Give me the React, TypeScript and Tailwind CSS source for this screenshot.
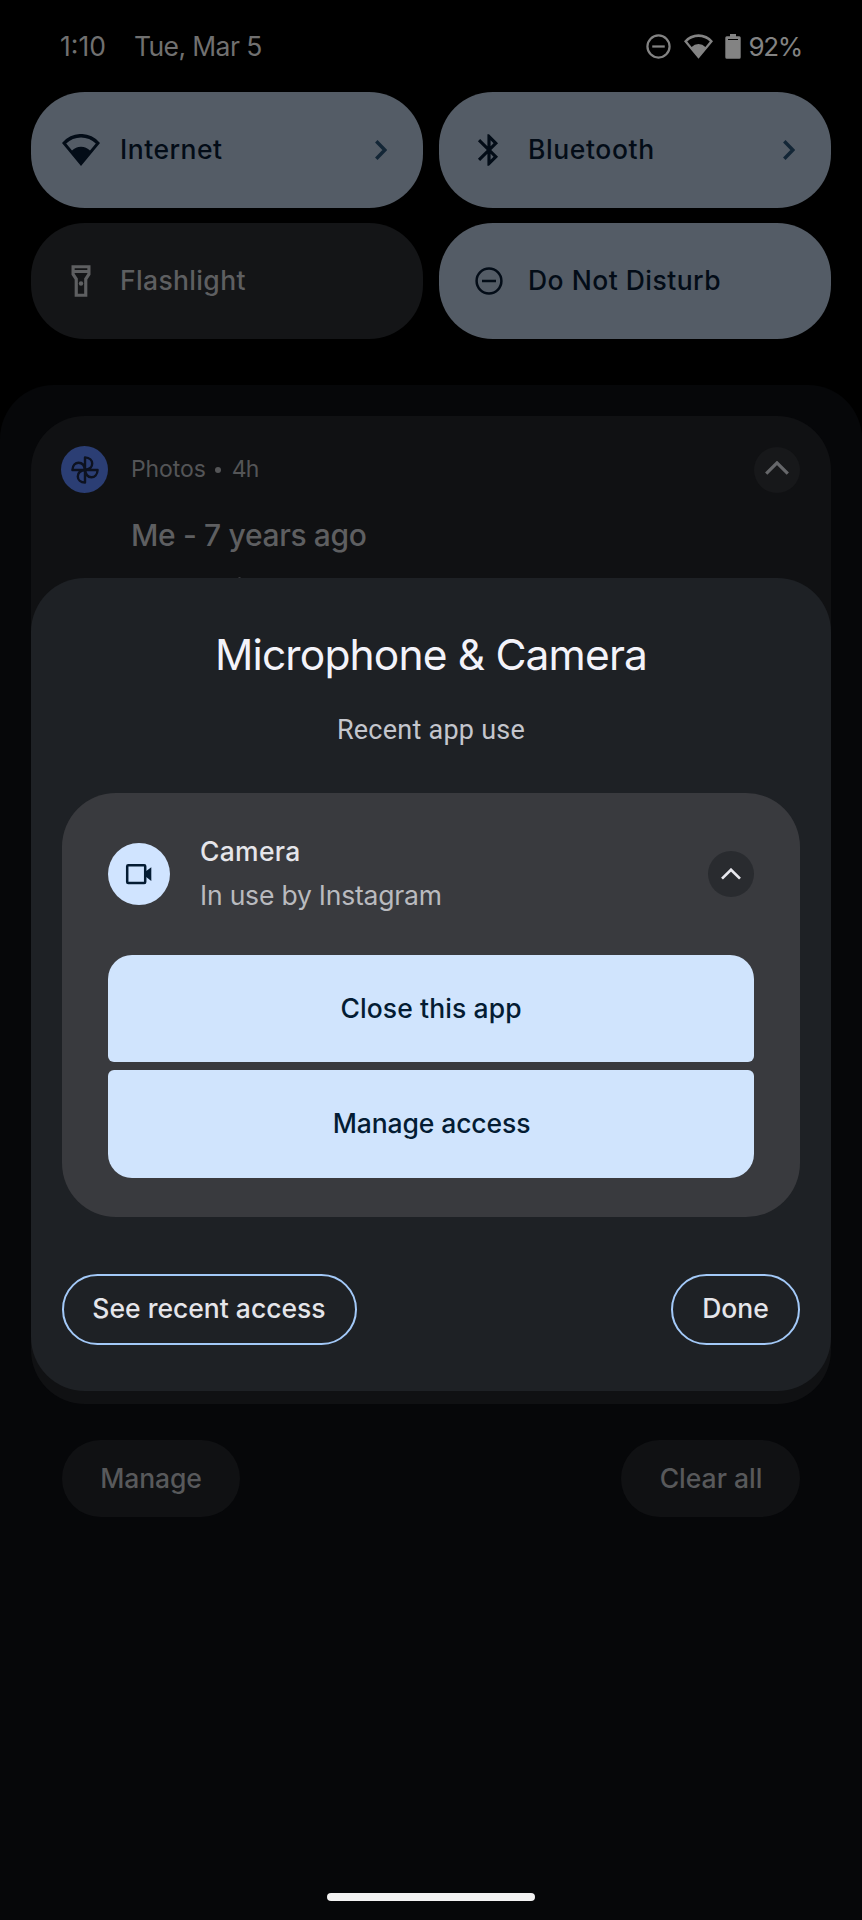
import React, { useState } from 'react';
import clsx from 'clsx';

interface Tile {
  id: string;
  label: string;
  active: boolean;
  hasDetails: boolean;
  icon: React.ReactNode;
  spacing: string;
}

function WifiIcon({ className }: { className?: string }) {
  return (
    <svg viewBox="0 0 38 32" className={className} fill="currentColor">
      <path
        fillRule="evenodd"
        d="M0 9A24.5 24.5 0 0 1 38 9L19 32ZM4.2 9.6L10 16.6A12.5 12.5 0 0 1 28 16.6L33.8 9.6A21 21 0 0 0 4.2 9.6Z"
      />
    </svg>
  );
}

function DndIcon({ className }: { className?: string }) {
  return (
    <svg viewBox="0 0 28 28" className={className} fill="none" stroke="currentColor" strokeWidth="2.5">
      <circle cx="14" cy="14" r="12.4" />
      <path d="M7 14h14" />
    </svg>
  );
}

function BluetoothIcon({ className }: { className?: string }) {
  return (
    <svg viewBox="0 0 24 24" className={className} fill="currentColor">
      <path d="M17.71 7.71L12 2h-1v7.59L6.41 5 5 6.41 10.59 12 5 17.59 6.41 19 11 14.41V22h1l5.71-5.71-4.3-4.29 4.3-4.29zM13 5.83l1.88 1.88L13 9.59V5.83zm1.88 10.46L13 18.17v-3.76l1.88 1.88z" />
    </svg>
  );
}

function FlashlightIcon({ className }: { className?: string }) {
  return (
    <svg viewBox="0 0 24 24" className={className} fill="currentColor">
      <path
        fillRule="evenodd"
        d="M18 2H6v6l2 3v11h8V11l2-3V2zm-2 2v1H8V4h8zm-2 6.4V20h-4v-9.6L8 7.4V7h8v.4l-2 3z"
      />
      <circle cx="12" cy="13.6" r="1.4" />
    </svg>
  );
}

function BatteryIcon({ className }: { className?: string }) {
  return (
    <svg viewBox="0 0 16 25" className={className} fill="currentColor">
      <path
        fillRule="evenodd"
        d="M5 0h6v2.3h3.2q1.5 0 1.5 1.5v19.4q0 1.5-1.5 1.5H1.8q-1.5 0-1.5-1.5V3.8q0-1.5 1.5-1.5H5zM3 4.9v1.2h10V4.9z"
      />
    </svg>
  );
}

function PhotosIcon({ className }: { className?: string }) {
  return (
    <svg viewBox="-14 -14 28 28" className={className} fill="none" stroke="currentColor" strokeWidth="2.4" strokeLinejoin="round">
      {[0, 90, 180, 270].map((angle) => (
        <path key={angle} d="M0 0V-12.6C4.6 -12.4 7.2 -9.6 7.2 -6.4C7.2 -3.2 5.2 -0.6 0 0Z" transform={`rotate(${angle})`} />
      ))}
    </svg>
  );
}

function VideoIcon({ className }: { className?: string }) {
  return (
    <svg viewBox="0 0 28 22" className={className}>
      <rect x="2.2" y="2.2" width="18" height="17.8" rx="1" fill="none" stroke="currentColor" strokeWidth="2.5" />
      <path d="M20.5 8.6L26.3 4.2V18L20.5 13.6Z" fill="currentColor" />
    </svg>
  );
}

function ChevronUp({ className }: { className?: string }) {
  return (
    <svg viewBox="0 0 24 14" className={className} fill="none" stroke="currentColor" strokeWidth="3.2">
      <path d="M1.2 12.6L12 1.9L22.8 12.6" />
    </svg>
  );
}

const tiles: Tile[] = [
  { id: 'internet', label: 'Internet', active: true, hasDetails: true, icon: <WifiIcon className="w-[38px] h-8" />, spacing: 'tracking-[0.5px]' },
  { id: 'bluetooth', label: 'Bluetooth', active: true, hasDetails: true, icon: <BluetoothIcon className="w-[38px] h-[38px]" />, spacing: 'tracking-[0.6px]' },
  { id: 'flashlight', label: 'Flashlight', active: false, hasDetails: false, icon: <FlashlightIcon className="w-[38px] h-[38px]" />, spacing: 'tracking-[0.35px]' },
  { id: 'dnd', label: 'Do Not Disturb', active: true, hasDetails: false, icon: <DndIcon className="w-7 h-7" />, spacing: 'tracking-[0.48px]' },
];

function QuickTile({ tile, active, onToggle }: { tile: Tile; active: boolean; onToggle: () => void }) {
  return (
    <button
      onClick={onToggle}
      className={clsx(
        'flex h-[116px] items-center rounded-[54px] pl-[31px] pr-9 text-left',
        active ? 'bg-[#545c66] text-[#030c17]' : 'bg-[#141517] text-[#5e5f61]'
      )}
    >
      <span className="flex w-[38px] justify-center">{tile.icon}</span>
      <span className={clsx('ml-5 flex-1 whitespace-nowrap text-[26.5px] font-medium', tile.spacing)}>{tile.label}</span>
      {tile.hasDetails && (
        <svg viewBox="0 0 12 20" className="h-5 w-3 text-[#132636]" fill="none" stroke="currentColor" strokeWidth="3.4">
          <path d="M1.3 1.2L9.8 10L1.3 18.8" />
        </svg>
      )}
    </button>
  );
}

function StatusBar() {
  return (
    <div className="flex h-[92px] items-center pl-[60px] pr-[60px] text-[26.5px] text-[#707070]">
      <span className="pt-[2px]">1:10</span>
      <span className="ml-7 pt-[2px] tracking-[-0.6px]">Tue, Mar 5</span>
      <div className="ml-auto flex items-center text-[#838383]">
        <DndIcon className="h-[25px] w-[25px]" />
        <WifiIcon className="ml-[13px] h-[25px] w-[29px]" />
        <BatteryIcon className="ml-3 h-[25px] w-4" />
        <span className="ml-[7px] text-[26px] tracking-[-1.3px]">92%</span>
      </div>
    </div>
  );
}

function PrivacyDialog() {
  const [expanded, setExpanded] = useState(true);

  return (
    <div className="absolute left-[31px] top-[578px] flex h-[813px] w-[800px] flex-col rounded-[54px] bg-[#1e2125] px-[31px]">
      <h1 className="mt-[52px] text-center text-[42.5px] leading-[50px] tracking-[-0.85px] text-[#f3f3fa]">Microphone &amp; Camera</h1>
      <p className="mt-[34px] text-center [font-family:Roboto,sans-serif] text-[27px] leading-8 tracking-[0.25px] text-[#c4c6cd]">Recent app use</p>

      <div className="mt-[47px] h-[424px] rounded-[54px] bg-[#393a3e] px-[46px] pt-[44px]">
        <div className="flex h-[74px] items-center">
          <div className="flex h-[62px] w-[62px] items-center justify-center rounded-full bg-[#d0e4ff] text-[#041c33]">
            <VideoIcon className="h-[22px] w-7" />
          </div>
          <div className="-mt-[2px] ml-[30px]">
            <p className="text-[26.5px] font-medium leading-[44px] tracking-[0.3px] text-[#e5e5ea]">Camera</p>
            <p className="text-[26.5px] leading-[44px] tracking-[-0.2px] text-[#b9babf]">In use by Instagram</p>
          </div>
          <button
            onClick={() => setExpanded(!expanded)}
            className="ml-auto flex h-[46px] w-[46px] items-center justify-center rounded-full bg-[#292b2f] text-[#e8e8ee]"
          >
            <ChevronUp className="h-3 w-5" />
          </button>
        </div>

        {expanded && (
          <div className="mt-[44px] flex flex-col gap-2 text-[26.5px] font-medium text-[#041c33]">
            <button className="h-[107px] rounded-t-3xl rounded-b-[6px] bg-[#d0e4fd] tracking-[0.1px]">Close this app</button>
            <button className="h-[108px] rounded-t-[6px] rounded-b-3xl bg-[#d0e4fd] pl-px tracking-[-0.1px]">Manage access</button>
          </div>
        )}
      </div>

      <div className="mt-[57px] flex justify-between text-[26.5px] font-medium text-[#e5e5ea]">
        <button className="h-[71px] w-[295px] rounded-full border-2 border-[#a3c9f8] pb-px pr-px">See recent access</button>
        <button className="h-[71px] w-[129px] rounded-full border-2 border-[#a3c9f8] pb-px">Done</button>
      </div>
    </div>
  );
}

function App() {
  const [active, setActive] = useState<Record<string, boolean>>(
    Object.fromEntries(tiles.map((tile) => [tile.id, tile.active]))
  );

  return (
    <div className="relative flex h-[1920px] w-[862px] flex-col overflow-hidden bg-black [font-family:Inter,sans-serif]">
      <StatusBar />

      <div className="grid grid-cols-2 gap-x-4 gap-y-[15px] px-[31px]">
        {tiles.map((tile) => (
          <QuickTile
            key={tile.id}
            tile={tile}
            active={active[tile.id]}
            onToggle={() => setActive({ ...active, [tile.id]: !active[tile.id] })}
          />
        ))}
      </div>

      {/* Notification shade */}
      <div className="mt-[46px] flex flex-1 flex-col rounded-t-[54px] bg-[#060709] px-[31px] pt-[31px]">
        <div className="h-[988px] rounded-[54px] bg-[#101113] pl-[30px] pr-[31px] pt-[30px]">
          <div className="flex items-center">
            <div className="flex h-[47px] w-[47px] items-center justify-center rounded-full bg-[#2b3e74] text-[#0d1220]">
              <PhotosIcon className="h-7 w-7" />
            </div>
            <div className="ml-[23px] flex items-center text-[23px] text-[#545557]">
              <span className="tracking-[-0.1px]">Photos</span>
              <span className="ml-[9px] mr-[11px] h-[6px] w-[6px] rounded-full bg-[#545557]" />
              <span className="tracking-[-0.9px]">4h</span>
            </div>
            <div className="ml-auto flex h-[46px] w-[46px] items-center justify-center rounded-full bg-[#17181a] text-[#66676a]">
              <ChevronUp className="mb-1 h-[14px] w-6" />
            </div>
          </div>
          <p className="ml-[70px] mt-[22px] text-[30px] font-medium leading-10 tracking-[-0.35px] text-[#5e5f61]">Me - 7 years ago</p>
          <span className="ml-[177px] mt-[22px] block h-[3px] w-[3px] rounded-full bg-[#3d3e40]" />
        </div>

        <div className="mt-9 flex justify-between px-[31px] text-[26.5px] font-medium text-[#58595b]">
          <button className="h-[77px] w-[178px] rounded-full bg-[#101113] tracking-[-0.1px]">Manage</button>
          <button className="h-[77px] w-[179px] rounded-full bg-[#101113] pl-px">Clear all</button>
        </div>

        <div className="mx-auto mb-[19px] mt-auto h-2 w-[208px] rounded-full bg-[#f2f2f2]" />
      </div>

      <PrivacyDialog />
    </div>
  );
}

export default App;
